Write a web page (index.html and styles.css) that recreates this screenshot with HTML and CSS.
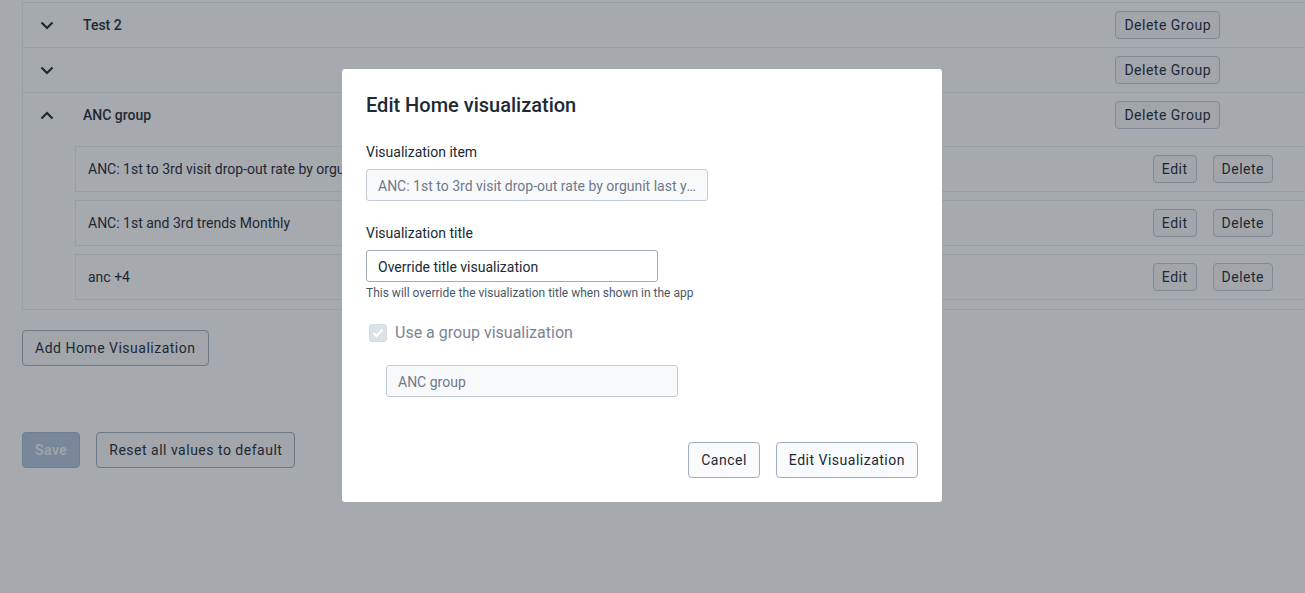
FILE: index.html
```html
<!DOCTYPE html>
<html lang="en">
<head>
<meta charset="utf-8">
<title>Home visualizations</title>
<link rel="stylesheet" href="styles.css">
</head>
<body>
<div class="page">
  <div class="groups">
    <div class="group-row">
      <span class="chev"><svg width="14" height="9" viewBox="0 0 14 9"><path d="M1.5 1.5 L7 7 L12.5 1.5" fill="none" stroke="#212934" stroke-width="2.2"/></svg></span>
      <span class="group-name">Test 2</span>
      <button class="btn btn-small">Delete Group</button>
    </div>
    <div class="group-row">
      <span class="chev"><svg width="14" height="9" viewBox="0 0 14 9"><path d="M1.5 1.5 L7 7 L12.5 1.5" fill="none" stroke="#212934" stroke-width="2.2"/></svg></span>
      <span class="group-name"></span>
      <button class="btn btn-small">Delete Group</button>
    </div>
    <div class="group-row open">
      <span class="chev"><svg width="14" height="9" viewBox="0 0 14 9"><path d="M1.5 7.5 L7 2 L12.5 7.5" fill="none" stroke="#212934" stroke-width="2.2"/></svg></span>
      <span class="group-name">ANC group</span>
      <button class="btn btn-small">Delete Group</button>
    </div>
    <div class="group-body">
      <div class="item">
        <span class="item-name">ANC: 1st to 3rd visit drop-out rate by orgunit last year</span>
        <button class="btn btn-small">Edit</button>
        <button class="btn btn-small">Delete</button>
      </div>
      <div class="item">
        <span class="item-name">ANC: 1st and 3rd trends Monthly</span>
        <button class="btn btn-small">Edit</button>
        <button class="btn btn-small">Delete</button>
      </div>
      <div class="item">
        <span class="item-name">anc +4</span>
        <button class="btn btn-small">Edit</button>
        <button class="btn btn-small">Delete</button>
      </div>
    </div>
  </div>
  <div class="add-row">
    <button class="btn">Add Home Visualization</button>
  </div>
  <div class="actions">
    <button class="btn btn-primary" disabled>Save</button>
    <button class="btn">Reset all values to default</button>
  </div>
</div>

<div class="overlay"></div>
<div class="modal">
  <h2 class="modal-title">Edit Home visualization</h2>
  <div class="field">
    <div class="label">Visualization item</div>
    <div class="input input-disabled input-wide">ANC: 1st to 3rd visit drop-out rate by orgunit last year</div>
  </div>
  <div class="field field-title">
    <div class="label">Visualization title</div>
    <div class="input">Override title visualization</div>
    <div class="help">This will override the visualization title when shown in the app</div>
  </div>
  <div class="check-row">
    <span class="checkbox"><svg width="12" height="10" viewBox="0 0 12 10"><path d="M1.5 5 L4.5 8 L10.5 1.5" fill="none" stroke="#fff" stroke-width="2"/></svg></span>
    <span class="check-label">Use a group visualization</span>
  </div>
  <div class="group-field">
    <div class="input input-disabled">ANC group</div>
  </div>
  <div class="modal-actions">
    <button class="btn">Cancel</button>
    <button class="btn">Edit Visualization</button>
  </div>
</div>
</body>
</html>
```
FILE: styles.css
```css
* { box-sizing: border-box; }
html, body { margin: 0; padding: 0; }
body {
  font-family: Roboto, "Noto Sans", sans-serif;
  color: #212934;
  background: #ffffff;
  overflow: hidden;
  width: 1305px;
  height: 593px;
}
.page {
  padding: 2px 0 0 22px;
  width: 1400px;
}
.groups {
  width: 1308px;
  border: 1px solid #e8edf2;
}
.group-row {
  display: flex;
  align-items: center;
  height: 45px;
  border-bottom: 1px solid #e8edf2;
}
.group-row.open {
  height: 44px;
  border-bottom: none;
}
.chev {
  width: 48px;
  display: flex;
  justify-content: center;
  align-items: center;
}
.group-name {
  flex: 1;
  padding-left: 12px;
  font-size: 14px;
  font-weight: 500;
}
.group-row .btn-small { margin-right: 109px; }
.group-body {
  padding: 9px 10px 9px 52px;
  display: flex;
  flex-direction: column;
  gap: 8px;
}
.item {
  display: flex;
  align-items: center;
  height: 46px;
  border: 1px solid #e8edf2;
  padding: 0 45px 0 12px;
  gap: 16px;
}
.item-name {
  flex: 1;
  font-size: 14px;
}
.btn {
  font-family: Roboto, "Noto Sans", sans-serif;
  font-size: 14px;
  letter-spacing: 0.5px;
  color: #212934;
  background: #f9fafb;
  border: 1px solid #a0adba;
  border-radius: 4px;
  height: 36px;
  padding: 0 12px 1px;
  white-space: nowrap;
}
.btn-small {
  height: 28px;
  padding: 0 8px;
  border-color: #c4cdd6;
}
.btn-primary {
  background: #b3c8de;
  border-color: #a3b8ce;
  color: #f4f6f9;
  font-weight: 500;
}
.add-row { margin-top: 20px; }
.actions {
  margin-top: 66px;
  display: flex;
  gap: 16px;
}
.overlay {
  position: fixed;
  inset: 0;
  background: rgba(33, 41, 52, 0.4);
}
.modal {
  position: fixed;
  left: 342px;
  top: 69px;
  width: 600px;
  background: #ffffff;
  border-radius: 3px;
  padding: 24px;
}
.modal-title {
  margin: 0;
  font-size: 20px;
  line-height: 24px;
  font-weight: 500;
  color: #212934;
}
.field { margin-top: 26px; }
.field-title { margin-top: 23px; }
.label {
  font-size: 14px;
  line-height: 18px;
  margin-bottom: 8px;
}
.input {
  width: 292px;
  height: 32px;
  border: 1px solid #a0adba;
  border-radius: 3px;
  padding: 1px 11px 0;
  font-size: 14px;
  line-height: 30px;
  color: #212934;
  background: #ffffff;
  white-space: nowrap;
  overflow: hidden;
  text-overflow: ellipsis;
}
.input-wide { width: 342px; }
.input-disabled {
  background: #f8f9fa;
  color: #6e7a8a;
  border-color: #c4cdd6;
}
.help {
  margin-top: 4px;
  font-size: 12px;
  line-height: 14px;
  color: #4a5768;
}
.check-row {
  margin-top: 23px;
  display: flex;
  align-items: center;
  height: 20px;
  padding-left: 3px;
}
.checkbox {
  width: 18px;
  height: 18px;
  border-radius: 3px;
  background: #dbe1e8;
  border: 1px solid #d5dbe2;
  display: flex;
  align-items: center;
  justify-content: center;
}
.check-label {
  margin-left: 8px;
  font-size: 16px;
  line-height: 20px;
  color: #7b8594;
}
.group-field {
  margin-top: 22px;
  padding-left: 20px;
}
.modal-actions {
  margin-top: 45px;
  display: flex;
  justify-content: flex-end;
  gap: 16px;
}
```
